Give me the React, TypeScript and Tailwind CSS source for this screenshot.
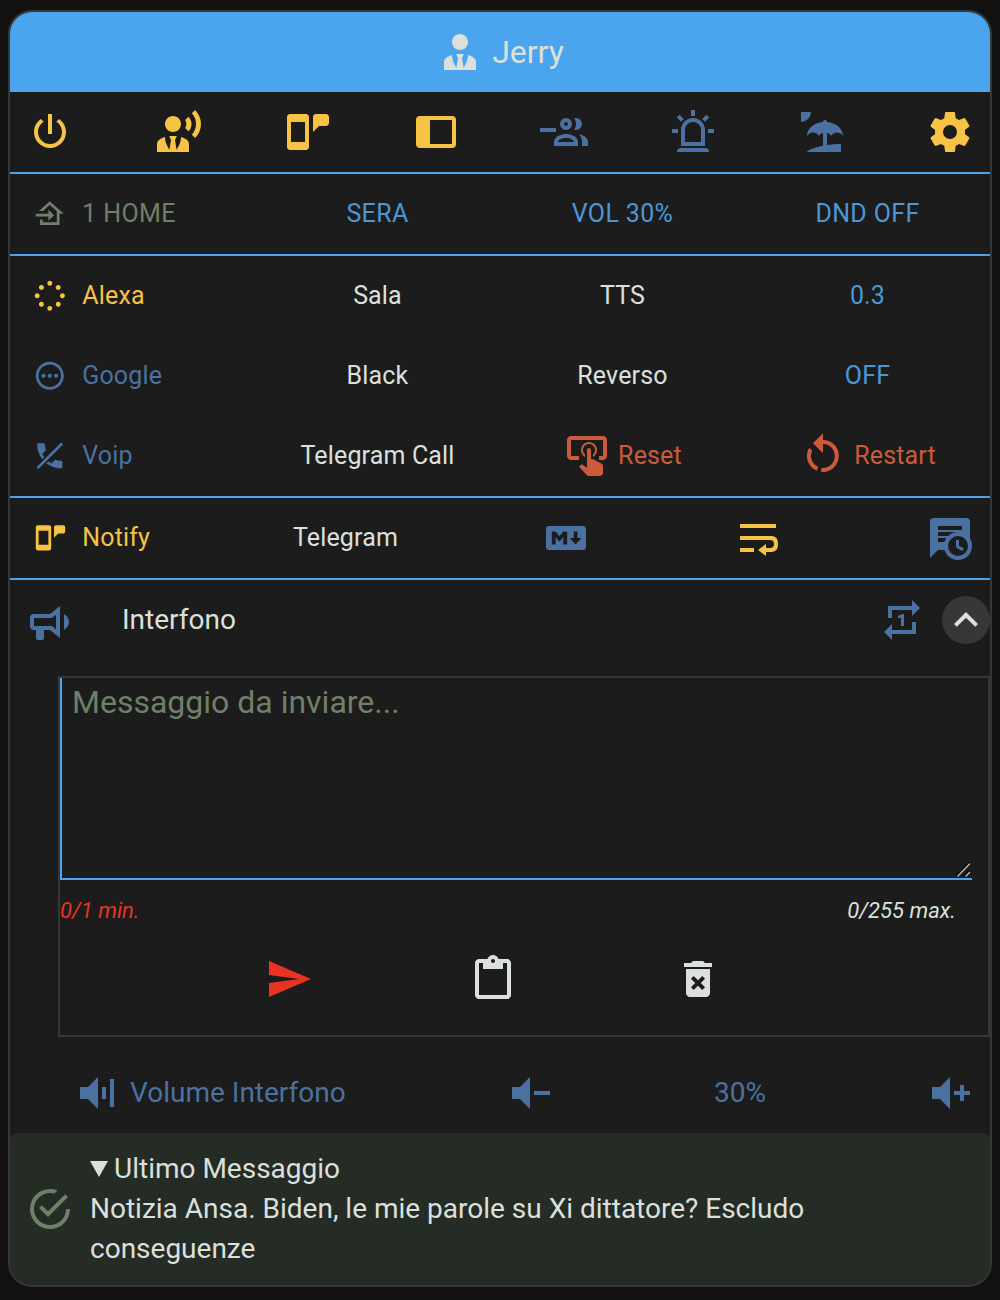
import React from "react";

const P = {
  power:
    "M16.56,5.44L15.11,6.89C16.84,7.94 18,9.83 18,12A6,6 0 0,1 12,18A6,6 0 0,1 6,12C6,9.83 7.16,7.94 8.88,6.88L7.44,5.44C5.36,6.88 4,9.28 4,12A8,8 0 0,0 12,20A8,8 0 0,0 20,12C20,9.28 18.64,6.88 16.56,5.44M13,3H11V13H13",
  tie: "M12 3C14.21 3 16 4.79 16 7S14.21 11 12 11 8 9.21 8 7 9.79 3 12 3M16 13.54C16 14.6 15.72 17.07 13.81 19.83L13 15L13.94 13.12C13.32 13.05 12.67 13 12 13S10.68 13.05 10.06 13.12L11 15L10.19 19.83C8.28 17.07 8 14.6 8 13.54C5.61 14.24 4 15.5 4 17V21H20V17C20 15.5 18.4 14.24 16 13.54Z",
  tieVoice:
    "M9 4C11.21 4 13 5.79 13 8S11.21 12 9 12 5 10.21 5 8 6.79 4 9 4M13 14.54C13 15.6 12.72 18.07 10.81 20.83L10 16L10.94 14.12C10.32 14.05 9.67 14 9 14S7.68 14.05 7.06 14.12L8 16L7.19 20.83C5.28 18.07 5 15.6 5 14.54C2.61 15.24 1 16.5 1 18V22H17V18C17 16.5 15.4 15.24 13 14.54M16.76,4.36C18.78,6.56 18.78,9.61 16.76,11.63L15.08,9.94C15.92,8.76 15.92,7.23 15.08,6.05L16.76,4.36M20.07,1C24,5.05 23.97,11.11 20.07,15L18.44,13.37C21.21,10.19 21.21,5.65 18.44,2.63L20.07,1Z",
  phoneMsg:
    "M3.5,3C2.67,3 2,3.67 2,4.5V19.5C2,20.33 2.67,21 3.5,21H11.5C12.33,21 13,20.33 13,19.5V4.5C13,3.67 12.33,3 11.5,3H3.5M4,7H11V17H4V7M16.5,3C15.67,3 15,3.67 15,4.5V12L18,9H21.5C22.33,9 23,8.33 23,7.5V4.5C23,3.67 22.33,3 21.5,3Z",
  dock: "M20,4H4A2,2 0 0,0 2,6V18A2,2 0 0,0 4,20H20A2,2 0 0,0 22,18V6A2,2 0 0,0 20,4M20,18H9V6H20V18Z",
  group:
    "M0,10H8V12H0ZM13,5A3,3 0 1,0 13,11A3,3 0 1,0 13,5M13,7A1,1 0 1,1 13,9A1,1 0 1,1 13,7M17.11,5.14C17.4,5.05 17.7,5 18,5A3,3 0 0,1 18,11C17.7,11 17.4,10.95 17.11,10.86C18.3,9.15 18.3,6.85 17.11,5.14M13,13C11,13 7,14 7,17V19H19V17C19,14 15,13 13,13M9,17C9,16 11,15 13,15C15,15 17,16 17,17M19.5,13.2C20.45,14.1 21,15.3 21,17V19H24V17C24,14.82 21.9,13.55 19.5,13.2Z",
  alarm:
    "M6,6.9L3.87,4.78L5.28,3.37L7.4,5.5L6,6.9M13,1V4H11V1H13M20.13,4.78L18,6.9L16.6,5.5L18.72,3.37L20.13,4.78M4.5,10.5V12.5H1.5V10.5H4.5M19.5,10.5H22.5V12.5H19.5V10.5M6,20H18A2,2 0 0,1 20,22H4A2,2 0 0,1 6,20M12,5A6,6 0 0,1 18,11V19H6V11A6,6 0 0,1 12,5M12,7A4,4 0 0,0 8,11V17H16V11A4,4 0 0,0 12,7Z",
  beach:
    "M15,18.54C17.13,18.21 19.5,18 22,18V22H5C5,21.35 8.2,19.86 13,18.9V12.4C12.16,12.65 11.45,13.21 11,13.95C10.39,12.93 9.27,12.25 8,12.25C6.73,12.25 5.61,12.93 5,13.95C5.03,10.37 8.5,7.43 13,7.04V7A1,1 0 0,1 14,6A1,1 0 0,1 15,7V7.04C19.5,7.43 22.96,10.37 23,13.95C22.39,12.93 21.27,12.25 20,12.25C18.73,12.25 17.61,12.93 17,13.95C16.55,13.21 15.84,12.65 15,12.39V18.54M7,2A5,5 0 0,1 2,7V2H7Z",
  cog: "M12,15.5A3.5,3.5 0 0,1 8.5,12A3.5,3.5 0 0,1 12,8.5A3.5,3.5 0 0,1 15.5,12A3.5,3.5 0 0,1 12,15.5M19.43,12.97C19.47,12.65 19.5,12.33 19.5,12C19.5,11.67 19.47,11.34 19.43,11L21.54,9.37C21.73,9.22 21.78,8.95 21.66,8.73L19.66,5.27C19.54,5.05 19.27,4.96 19.05,5.05L16.56,6.05C16.04,5.66 15.5,5.32 14.87,5.07L14.5,2.42C14.46,2.18 14.25,2 14,2H10C9.75,2 9.54,2.18 9.5,2.42L9.13,5.07C8.5,5.32 7.96,5.66 7.44,6.05L4.95,5.05C4.73,4.96 4.46,5.05 4.34,5.27L2.34,8.73C2.21,8.95 2.27,9.22 2.46,9.37L4.57,11C4.53,11.34 4.5,11.67 4.5,12C4.5,12.33 4.53,12.65 4.57,12.97L2.46,14.63C2.27,14.78 2.21,15.05 2.34,15.27L4.34,18.73C4.46,18.95 4.73,19.03 4.95,18.95L7.44,17.94C7.96,18.34 8.5,18.68 9.13,18.93L9.5,21.58C9.54,21.82 9.75,22 10,22H14C14.25,22 14.46,21.82 14.5,21.58L14.87,18.93C15.5,18.67 16.04,18.34 16.56,17.94L19.05,18.95C19.27,19.03 19.54,18.95 19.66,18.73L21.66,15.27C21.78,15.05 21.73,14.78 21.54,14.63L19.43,12.97Z",
  home: "M15 13L11 9V12H2V14H11V17M5 20V16H7V18H17V10.19L12 5.69L7.21 10H4.22L12 3L22 12H19V20H5Z",
  dots: "M12,1.25a1.75,1.75 0 1,0 .01,0ZM12,19.25a1.75,1.75 0 1,0 .01,0ZM3,10.25a1.75,1.75 0 1,0 .01,0ZM21,10.25a1.75,1.75 0 1,0 .01,0ZM6,4.25a1.75,1.75 0 1,0 .01,0ZM18,4.25a1.75,1.75 0 1,0 .01,0ZM6,16.25a1.75,1.75 0 1,0 .01,0ZM18,16.25a1.75,1.75 0 1,0 .01,0Z",
  dotsCircle:
    "M12 2C6.5 2 2 6.5 2 12S6.5 22 12 22 22 17.5 22 12 17.5 2 12 2M12 20C7.58 20 4 16.42 4 12S7.58 4 12 4 20 7.58 20 12 16.42 20 12 20M7.5,10.5a1.5,1.5 0 1,0 .01,0ZM12,10.5a1.5,1.5 0 1,0 .01,0ZM16.5,10.5a1.5,1.5 0 1,0 .01,0Z",
  handset:
    "M3,4A1,1 0 0,1 4,3H7.5A1,1 0 0,1 8.5,4C8.5,5.25 8.7,6.45 9.07,7.57C9.18,7.92 9.1,8.31 8.82,8.59L6.62,10.79C7,11.6 7.5,12.3 8,13L6.6,14.4C4.3,11.5 3,7.9 3,4M9.5,17.4L11,16L13.21,17.38L15.41,15.18C15.68,14.9 16.08,14.82 16.43,14.93C17.55,15.3 18.75,15.5 20,15.5A1,1 0 0,1 21,16.5V20A1,1 0 0,1 20,21C16,21 12.4,19.65 9.5,17.4Z",
  tapButton:
    "M13 5C15.21 5 17 6.79 17 9C17 10.5 16.2 11.77 15 12.46V11.24C15.61 10.69 16 9.89 16 9C16 7.34 14.66 6 13 6S10 7.34 10 9C10 9.89 10.39 10.69 11 11.24V12.46C9.8 11.77 9 10.5 9 9C9 6.79 10.79 5 13 5M20 20.5C19.97 21.32 19.32 21.97 18.5 22H13C12.62 22 12.26 21.85 12 21.57L8 17.37L8.74 16.6C8.93 16.39 9.2 16.28 9.5 16.28H9.7L12 18V9C12 8.45 12.45 8 13 8S14 8.45 14 9V13.47L15.21 13.6L19.15 15.79C19.68 16.03 20 16.56 20 17.14V20.5M20 2H4C2.9 2 2 2.9 2 4V12C2 13.11 2.9 14 4 14H8V12L4 12L4 4H20L20 12H18V14H20V13.97L20.04 14C21.13 14 22 13.09 22 12V4C22 2.9 21.11 2 20 2Z",
  restart:
    "M12,4C14.1,4 16.1,4.8 17.6,6.3C20.7,9.4 20.7,14.5 17.6,17.6C15.8,19.5 13.3,20.2 10.9,19.9L11.4,17.9C13.1,18.1 14.9,17.5 16.2,16.2C18.5,13.9 18.5,10.1 16.2,7.7C15.1,6.6 13.5,6 12,6V10.6L7,5.6L12,.6V4M6.3,17.6C3.7,15 3.3,11 5.1,7.9L6.6,9.4C5.5,11.6 5.9,14.4 7.8,16.2C8.3,16.7 8.9,17.1 9.6,17.4L9,19.4C8,19 7.1,18.4 6.3,17.6Z",
  markdown:
    "M20.56 18H3.44C2.65 18 2 17.37 2 16.59V7.41C2 6.63 2.65 6 3.44 6H20.56C21.35 6 22 6.63 22 7.41V16.59C22 17.37 21.35 18 20.56 18M6.81 15.19V11.53L8.73 13.88L10.65 11.53V15.19H12.58V8.81H10.65L8.73 11.16L6.81 8.81H4.89V15.19H6.81M19.69 12H17.77V8.81H15.85V12H13.92L16.81 15.28L19.69 12Z",
  wrap: "M21,5H3V7H21V5M3,19H10V17H3V19M3,13H18C19,13 20,13.43 20,15C20,16.57 19,17 18,17H16V15L12,18L16,21V19H18C20.95,19 22,17.73 22,15C22,12.28 21,11 18,11H3V13Z",
  bullhorn:
    "M12,8H4A2,2 0 0,0 2,10V14A2,2 0 0,0 4,16H5V20A1,1 0 0,0 6,21H8A1,1 0 0,0 9,20V16H12L17,20V4L12,8M15,15.6L13,14H4V10H13L15,8.4V15.6M21.5,12C21.5,13.71 20.54,15.26 19,16V8C20.53,8.75 21.5,10.3 21.5,12Z",
  repeatOnce:
    "M13,15V9H12L10,10V11H11.5V15M17,17H7V14L3,18L7,22V19H19V13H17M7,7H17V10L21,6L17,2V5H5V11H7V7Z",
  chevronUp: "M7.41,15.41L12,10.83L16.59,15.41L18,14L12,8L6,14L7.41,15.41Z",
  send: "M2,21L23,12L2,3V10L17,12L2,14V21Z",
  paste:
    "M19 2h-4.18C14.4.84 13.3 0 12 0c-1.3 0-2.4.84-2.82 2H5c-1.1 0-2 .9-2 2v16c0 1.1.9 2 2 2h14c1.1 0 2-.9 2-2V4c0-1.1-.9-2-2-2zm-7 0c.55 0 1 .45 1 1s-.45 1-1 1-1-.45-1-1 .45-1 1-1zm7 18H5V4h2v3h10V4h2v16z",
  trash:
    "M6 19c0 1.1.9 2 2 2h8c1.1 0 2-.9 2-2V7H6v12zm2.46-7.12l1.41-1.41L12 12.59l2.12-2.12 1.41 1.41L13.41 14l2.12 2.12-1.41 1.41L12 15.41l-2.12 2.12-1.41-1.41L10.59 14l-2.13-2.12zM15.5 4l-1-1h-5l-1 1H5v2h14V4z",
  volume: "M3,9H7L12,4V20L7,15H3V9M14,9H16V15H14V9M18,5H20V19H18V5Z",
  volMinus: "M3,9H7L12,4V20L7,15H3V9M14,11H22V13H14V11Z",
  volPlus: "M3,9H7L12,4V20L7,15H3V9M14,11H17V8H19V11H22V13H19V16H17V13H14V11Z",
  check:
    "M20,12A8,8 0 0,1 12,20A8,8 0 0,1 4,12A8,8 0 0,1 12,4C12.76,4 13.5,4.11 14.2,4.31L15.77,2.74C14.61,2.26 13.34,2 12,2A10,10 0 0,0 2,12A10,10 0 0,0 12,22A10,10 0 0,0 22,12M7.91,10.08L6.5,11.5L11,16L21,6L19.59,4.58L11,13.17L7.91,10.08Z",
};

function Icon({ d, slash, className = "size-12" }: { d: string; slash?: string; className?: string }) {
  return (
    <svg viewBox="0 0 24 24" fill="currentColor" fillRule="evenodd" className={`shrink-0 ${className}`}>
      <path d={d} />
      {slash && <path d={slash} />}
    </svg>
  );
}

function MessageClock() {
  return (
    <svg viewBox="0 0 24 24" fill="currentColor" className="size-12 shrink-0">
      <path d="M4,2A2,2 0 0,0 2,4V22L6,18H20A2,2 0 0,0 22,16V4A2,2 0 0,0 20,2Z" />
      <path d="M6,6H18V8H6ZM6,9H17V11H6ZM6,12H12V14H6Z" fill="#1c1c1c" />
      <circle cx="16" cy="16" r="7" />
      <circle cx="16" cy="16" r="5" fill="#1c1c1c" />
      <path d="M15,13H16.5V15.82L18.94,17.23L18.19,18.53L15,16.69Z" />
    </svg>
  );
}

const YELLOW = "text-[#f6c344]";
const MUTED = "text-[#4a719f]";
const BLUE = "text-[#4b98d8]";

function Lead({ d, slash, label, tone }: { d: string; slash?: string; label: string; tone: string }) {
  return (
    <div className={`flex items-center pl-[23.2px] ${tone}`}>
      <Icon d={d} slash={slash} className="size-[33.6px]" />
      <span className="ml-[15.5px]">{label}</span>
    </div>
  );
}

function Row({ children, className = "tracking-[0.15px]" }: { children: React.ReactNode; className?: string }) {
  return <div className={`grid h-20 grid-cols-4 items-center text-center text-[25px] ${className}`}>{children}</div>;
}

export default function App() {
  return (
    <div className="h-[1300px] w-[1000px] bg-[#111111] px-2 pt-[10px] font-[Roboto,sans-serif] text-[#dce0dc]">
      <div className="h-[1277px] overflow-hidden rounded-[24px] border-2 border-[#373737] bg-[#1c1c1c]">
        <header className="flex h-20 items-center justify-center bg-[#4ba5ee]">
          <Icon d={P.tie} />
          <span className="ml-2 text-[32px]">Jerry</span>
        </header>

        <nav className="flex h-[82px] items-center justify-between border-b-2 border-[#4ba5ee] px-4">
          <Icon d={P.power} className={`size-12 ${YELLOW}`} />
          <Icon d={P.tieVoice} className={`size-12 ${YELLOW}`} />
          <Icon d={P.phoneMsg} className={`size-12 ${YELLOW}`} />
          <Icon d={P.dock} className={`size-12 ${YELLOW}`} />
          <Icon d={P.group} className={`size-12 ${MUTED}`} />
          <Icon d={P.alarm} className={`size-12 ${MUTED}`} />
          <Icon d={P.beach} className={`size-12 ${MUTED}`} />
          <Icon d={P.cog} className={`size-12 ${YELLOW}`} />
        </nav>

        <div className={`border-b-2 border-[#4ba5ee] ${BLUE}`}>
          <Row className="tracking-[0.35px]">
            <Lead d={P.home} label="1 HOME" tone="text-[#6f8069]" />
            <span>SERA</span>
            <span>VOL 30%</span>
            <span>DND OFF</span>
          </Row>
        </div>

        <div className="border-b-2 border-[#4ba5ee]">
          <Row>
            <Lead d={P.dots} label="Alexa" tone={YELLOW} />
            <span>Sala</span>
            <span>TTS</span>
            <span className={BLUE}>0.3</span>
          </Row>
          <Row>
            <Lead d={P.dotsCircle} label="Google" tone={MUTED} />
            <span>Black</span>
            <span>Reverso</span>
            <span className={BLUE}>OFF</span>
          </Row>
          <Row>
            <Lead
              d={P.handset}
              slash="M20.1,2.5L21.5,3.9L3.9,21.5L2.5,20.1L20.1,2.5"
              label="Voip"
              tone={MUTED}
            />
            <span>Telegram Call</span>
            <div className="flex items-center justify-center text-[#cb5b3a]">
              <Icon d={P.tapButton} />
              <span className="ml-[7px]">Reset</span>
            </div>
            <div className="flex items-center justify-center text-[#cb5b3a]">
              <Icon d={P.restart} />
              <span className="ml-[7px]">Restart</span>
            </div>
          </Row>
        </div>

        <div className="flex h-[82px] items-center border-b-2 border-[#4ba5ee] text-[25px] tracking-[0.15px]">
          <div className="w-[239px]">
            <Lead d={P.phoneMsg} label="Notify" tone={YELLOW} />
          </div>
          <span className="w-[193px] text-center">Telegram</span>
          <div className="flex flex-1 items-center justify-between pr-4 pl-[100px]">
            <Icon d={P.markdown} className={`size-12 ${MUTED}`} />
            <Icon d={P.wrap} className={`size-12 ${YELLOW}`} />
            <span className={MUTED}>
              <MessageClock />
            </span>
          </div>
        </div>

        <div className="flex h-20 items-center pl-4">
          <Icon d={P.bullhorn} className={`mt-1 size-12 ${MUTED}`} />
          <span className="ml-12 flex-1 text-[28px]">Interfono</span>
          <Icon d={P.repeatOnce} className={`mr-4 size-12 ${MUTED}`} />
          <button className="size-12 rounded-full bg-[#373737]">
            <Icon d={P.chevronUp} />
          </button>
        </div>

        <section className="mt-4 ml-12 h-[361px] border-2 border-[#373737]">
          <div className="flex h-[202px] w-[912px] items-end justify-between border-b-2 border-l-2 border-[#4ba5ee] pl-[10px]">
            <span className="self-start pt-1 text-[32px] leading-[40px] text-[#6f8069]">
              Messaggio da inviare...
            </span>
            <svg viewBox="0 0 16 16" className="size-4" fill="none">
              <path d="M.5 14.5L14 .5M8.5 14.5L14 8.5" stroke="#0a0a0a" strokeWidth="3" />
              <path d="M1.5 14.5L14 1.500M9.5 14.5L14 10" stroke="#b5b5b0" strokeWidth="1.5" />
            </svg>
          </div>
          <div className="flex h-[60px] items-center justify-between pr-[32px] text-[22px] italic">
            <span className="text-[#ea3323]">0/1 min.</span>
            <span>0/255 max.</span>
          </div>
          <div className="flex justify-center gap-[156.5px] pt-[15px] pr-[62px]">
            <Icon d={P.send} className="size-12 text-[#ea3323]" />
            <Icon d={P.paste} />
            <Icon d={P.trash} />
          </div>
        </section>

        <div className={`flex h-24 items-center pr-4 pl-16 text-[28px] ${MUTED}`}>
          <Icon d={P.volume} className="mt-4 size-12" />
          <span className="mt-4 ml-2 w-[376px]">Volume Interfono</span>
          <Icon d={P.volMinus} className="mt-4 size-12" />
          <span className="mt-4 flex-1 text-center">30%</span>
          <Icon d={P.volPlus} className="mt-4 size-12" />
        </div>

        <div className="flex h-[152px] items-center rounded-t-lg bg-[#252b25] pl-4 text-[28px] leading-10">
          <Icon d={P.check} className="size-12 text-[#6f8069]" />
          <div className="ml-4 w-[760px]">
            <div className="flex items-center">
              <svg viewBox="0 0 18 16" className="mr-[6px] h-4 w-[18px]" fill="currentColor">
                <path d="M0 0H18L9 16Z" />
              </svg>
              <span>Ultimo Messaggio</span>
            </div>
            <p>Notizia Ansa. Biden, le mie parole su Xi dittatore? Escludo conseguenze</p>
          </div>
        </div>
      </div>
    </div>
  );
}
